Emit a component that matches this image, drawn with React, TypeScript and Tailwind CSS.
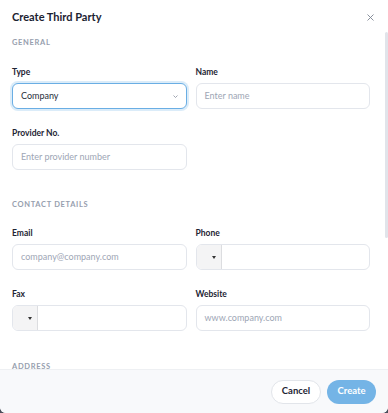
import React from "react";

const Label = ({ children }: { children: React.ReactNode }) => (
  <div className="h-[11px] leading-[11px] text-[8.5px] font-bold text-[#1d2433] mb-[5px]">{children}</div>
);

const Section = ({ children }: { children: React.ReactNode }) => (
  <div className="h-[12px] leading-[12px] text-[7.5px] font-bold tracking-[0.09em] text-[#969eae] uppercase">{children}</div>
);

const Input = ({ placeholder }: { placeholder: string }) => (
  <div className="h-[26px] rounded-[6px] border border-[#e3e6ec] bg-white flex items-center px-[8px] text-[9px] text-[#9ea6b5]">
    {placeholder}
  </div>
);

const PhoneInput = () => (
  <div className="h-[26px] rounded-[6px] border border-[#e3e6ec] bg-white flex overflow-hidden">
    <div className="w-[25px] h-full bg-[#f4f4f5] border-r border-[#dcdde0] flex items-center justify-end pr-[5px]">
      <svg width="4" height="3" viewBox="0 0 4 3">
        <path d="M0 0 L4 0 L2 3 Z" fill="#333" />
      </svg>
    </div>
    <div className="flex-1" />
  </div>
);

const Field = ({ label, children }: { label: string; children: React.ReactNode }) => (
  <div className="flex flex-col">
    <Label>{label}</Label>
    {children}
  </div>
);

export default function App() {
  return (
    <div className="w-[388px] h-[413px] bg-[#4a4f5b]" style={{ fontFamily: "Lato, 'Noto Sans', sans-serif" }}>
      <div className="h-full flex flex-col bg-white rounded-b-[6px] overflow-hidden">
        <div className="h-[32px] shrink-0 flex items-center justify-between pl-[12px] pr-[12px] pt-[2px]">
          <div className="text-[11px] font-bold text-[#1b2231]">Create Third Party</div>
          <svg width="7" height="7" viewBox="0 0 7 7" className="mr-[2px]">
            <path d="M0.5 0.5 L6.5 6.5 M6.5 0.5 L0.5 6.5" stroke="#7d8492" strokeWidth="0.9" />
          </svg>
        </div>
        <div className="relative flex-1 min-h-0">
          <div className="h-full overflow-hidden pl-[12px] pr-[18px] pt-[5px] pb-[28px]">
            <Section>General</Section>
            <div className="grid grid-cols-2 gap-x-[9px] gap-y-[19px] mt-[18px]">
              <Field label="Type">
                <div className="h-[26px] rounded-[6px] border border-[#6aaee4] ring-2 ring-[#dbecf9] bg-white flex items-center justify-between px-[8px] text-[9px] text-[#272d3a]">
                  <span>Company</span>
                  <svg width="5" height="3" viewBox="0 0 5 3">
                    <path d="M0.5 0.5 L2.5 2.5 L4.5 0.5" stroke="#8a919e" strokeWidth="0.8" fill="none" />
                  </svg>
                </div>
              </Field>
              <Field label="Name">
                <Input placeholder="Enter name" />
              </Field>
              <Field label="Provider No.">
                <Input placeholder="Enter provider number" />
              </Field>
              <div />
            </div>
            <div className="mt-[29px]">
              <Section>Contact Details</Section>
            </div>
            <div className="grid grid-cols-2 gap-x-[9px] gap-y-[19px] mt-[17px]">
              <Field label="Email">
                <Input placeholder="company@company.com" />
              </Field>
              <Field label="Phone">
                <PhoneInput />
              </Field>
              <Field label="Fax">
                <PhoneInput />
              </Field>
              <Field label="Website">
                <Input placeholder="www.company.com" />
              </Field>
            </div>
            <div className="mt-[30px]">
              <Section>Address</Section>
            </div>
            <div className="grid grid-cols-2 gap-x-[9px] gap-y-[19px] mt-[18px]">
              <div className="col-span-2">
                <Field label="Street Address">
                  <Input placeholder="Enter street address" />
                </Field>
              </div>
              <Field label="Suburb">
                <Input placeholder="Enter suburb" />
              </Field>
              <Field label="State">
                <Input placeholder="Enter state" />
              </Field>
            </div>
          </div>
          <div className="absolute right-0 top-0 w-[3px] h-[206px] rounded-full bg-[#e1e4ea]" />
        </div>
        <div className="h-[44px] shrink-0 border-t border-[#eef0f3] bg-[#f8f9fb] flex items-center justify-end gap-[6px] px-[12px]">
          <button className="h-[24px] w-[50px] rounded-full border border-[#e2e5ea] bg-white text-[9.5px] font-bold text-[#1d2433]">
            Cancel
          </button>
          <button className="h-[24px] w-[49px] rounded-full bg-[#74b4e6] text-[9.5px] font-bold text-white">
            Create
          </button>
        </div>
      </div>
    </div>
  );
}
